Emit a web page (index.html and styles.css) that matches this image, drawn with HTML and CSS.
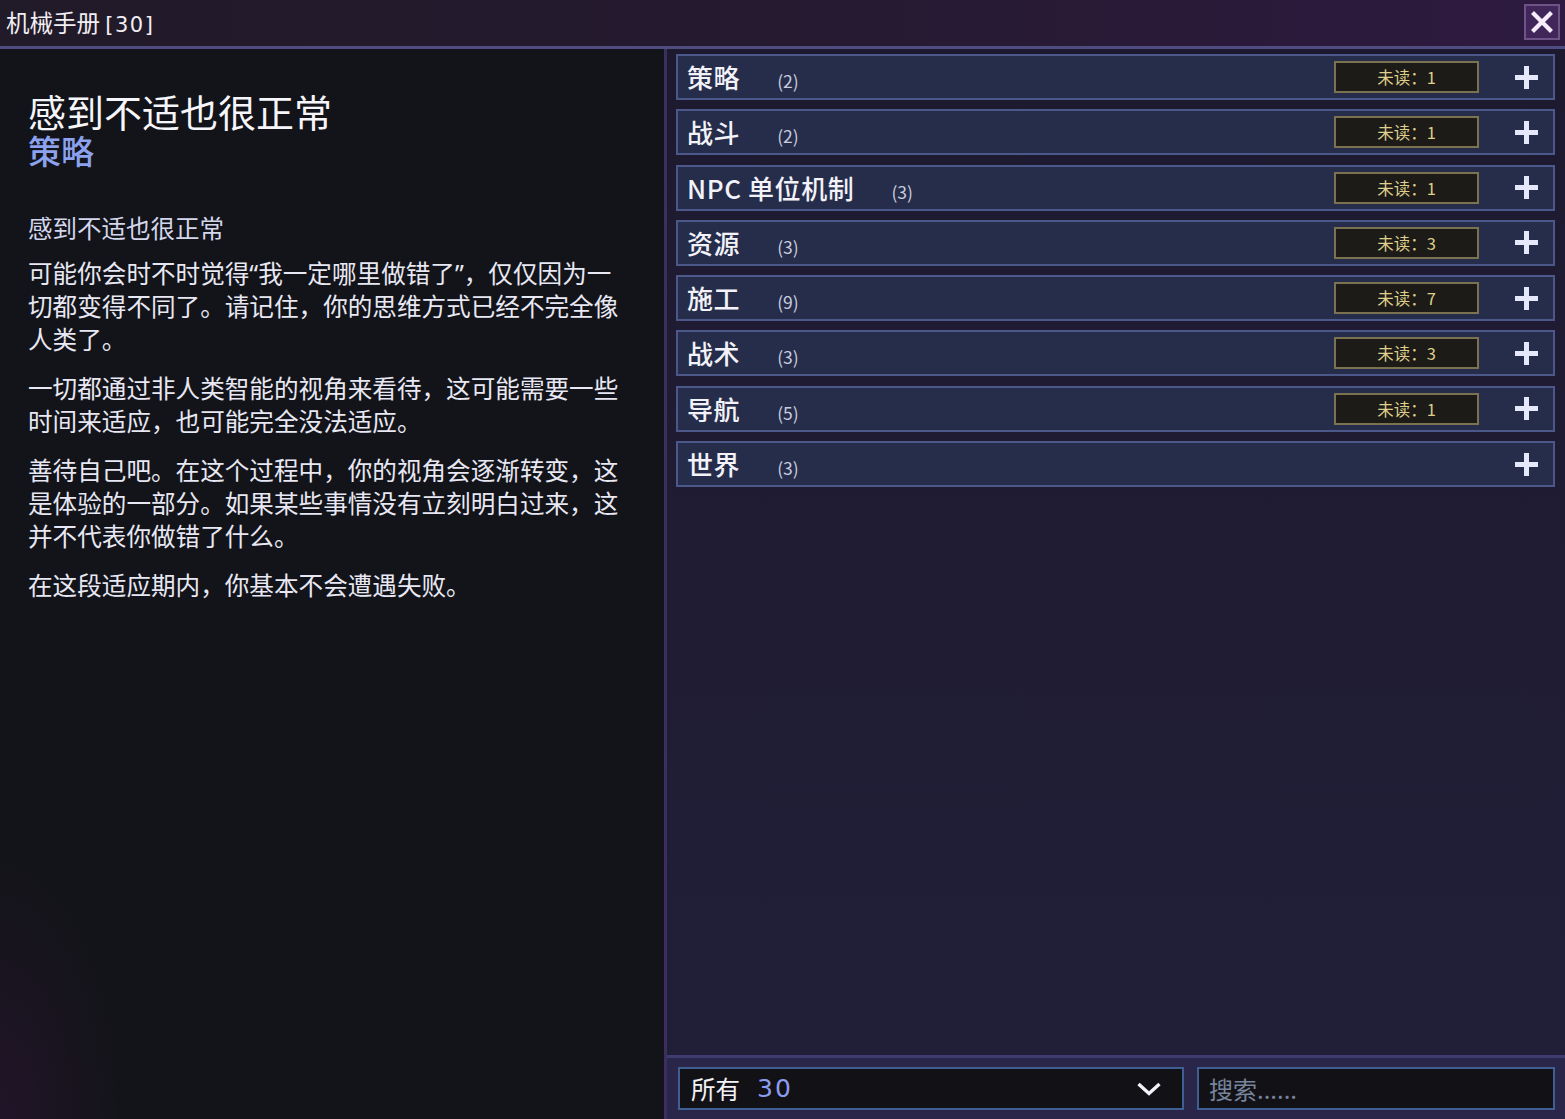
FILE: index.html
```html
<!DOCTYPE html>
<html lang="zh-CN">
<head>
<meta charset="utf-8">
<title>机械手册</title>
<link rel="stylesheet" href="styles.css">
</head>
<body>
<div class="window">
  <header class="titlebar">
    <div class="title">机械手册 <span class="title-count">[30]</span></div>
    <button class="close" aria-label="关闭">
      <svg width="22" height="22" viewBox="0 0 22 22"><path d="M3 3 L19 19 M19 3 L3 19" stroke="#f6ecfa" stroke-width="4.2" stroke-linecap="square"/></svg>
    </button>
  </header>
  <div class="main">
    <section class="left">
      <h1 class="heading">感到不适也很正常</h1>
      <div class="category">策略</div>
      <h2 class="subheading">感到不适也很正常</h2>
      <p>可能你会时不时觉得“我一定哪里做错了”，仅仅因为一切都变得不同了。请记住，你的思维方式已经不完全像人类了。</p>
      <p>一切都通过非人类智能的视角来看待，这可能需要一些时间来适应，也可能完全没法适应。</p>
      <p>善待自己吧。在这个过程中，你的视角会逐渐转变，这是体验的一部分。如果某些事情没有立刻明白过来，这并不代表你做错了什么。</p>
      <p>在这段适应期内，你基本不会遭遇失败。</p>
    </section>
    <section class="right">
      <div class="list">
        <div class="row"><span class="row-title">策略</span><span class="row-count">(2)</span><span class="badge">未读：1</span><span class="plus"></span></div>
        <div class="row"><span class="row-title">战斗</span><span class="row-count">(2)</span><span class="badge">未读：1</span><span class="plus"></span></div>
        <div class="row"><span class="row-title">NPC 单位机制</span><span class="row-count">(3)</span><span class="badge">未读：1</span><span class="plus"></span></div>
        <div class="row"><span class="row-title">资源</span><span class="row-count">(3)</span><span class="badge">未读：3</span><span class="plus"></span></div>
        <div class="row"><span class="row-title">施工</span><span class="row-count">(9)</span><span class="badge">未读：7</span><span class="plus"></span></div>
        <div class="row"><span class="row-title">战术</span><span class="row-count">(3)</span><span class="badge">未读：3</span><span class="plus"></span></div>
        <div class="row"><span class="row-title">导航</span><span class="row-count">(5)</span><span class="badge">未读：1</span><span class="plus"></span></div>
        <div class="row"><span class="row-title">世界</span><span class="row-count">(3)</span><span class="plus"></span></div>
      </div>
      <footer class="footer">
        <div class="dropdown">
          <span class="dd-label">所有</span><span class="dd-num">30</span>
          <svg class="chevron" width="26" height="16" viewBox="0 0 26 16"><path d="M2.5 3 L13 12.5 L23.5 3" fill="none" stroke="#f2f2fa" stroke-width="3.4"/></svg>
        </div>
        <div class="search">搜索......</div>
      </footer>
    </section>
  </div>
</div>
</body>
</html>
```

FILE: styles.css
```css
* { box-sizing: border-box; }
html, body { margin: 0; padding: 0; }
body {
  width: 1565px;
  height: 1119px;
  overflow: hidden;
  background: #131419;
  font-family: "Noto Sans CJK SC", "Noto Sans", sans-serif;
  color: #eeeef6;
}
.window {
  display: flex;
  flex-direction: column;
  height: 100%;
}
.titlebar {
  height: 49px;
  flex: none;
  display: flex;
  align-items: center;
  justify-content: space-between;
  padding: 0 5px 2px 6px;
  background: linear-gradient(90deg, #211a28 0%, #251a30 50%, #2e1a40 100%);
  border-bottom: 3px solid #4f4c82;
}
.title {
  font-size: 23.5px;
  color: #f1eef4;
}
.title-count {
  font-family: "DejaVu Sans", sans-serif;
  font-size: 21px;
  letter-spacing: 1.5px;
}
.close {
  width: 36px;
  height: 36px;
  padding: 0;
  border: 2px solid #6e5388;
  background: #41265a;
  display: flex;
  align-items: center;
  justify-content: center;
}
.main {
  flex: 1;
  display: flex;
  min-height: 0;
}
.left {
  width: 664px;
  flex: none;
  padding: 42px 28px 0 28px;
  background: radial-gradient(ellipse 120px 260px at 0% 100%, rgba(60, 20, 70, 0.35), rgba(0,0,0,0) 100%), #131419;
}
.heading {
  margin: 0;
  font-size: 38px;
  line-height: 40px;
  font-weight: 400;
  color: #f6f6fa;
}
.category {
  font-size: 33px;
  line-height: 38px;
  color: #8ca2ee;
  font-weight: 500;
}
.subheading {
  margin: 42px 0 13px;
  font-size: 24.5px;
  line-height: 33px;
  font-weight: 400;
  color: #d3d7ec;
}
.left p {
  margin: 0 0 16px;
  width: 606px;
  font-family: "Noto Sans", "Noto Sans CJK SC", sans-serif;
  font-size: 24.6px;
  line-height: 33px;
  color: #e8e8f4;
}
.right {
  flex: 1;
  display: flex;
  flex-direction: column;
  border-left: 3px solid #3a2f5e;
  background: linear-gradient(180deg, #1d1a30 0%, #211e38 100%);
}
.list {
  flex: 1;
  display: flex;
  flex-direction: column;
  gap: 9.3px;
  padding: 5px 10px 0 9px;
}
.row {
  height: 46px;
  display: flex;
  align-items: baseline;
  padding: 0 15px 0 9px;
  background: #252d4b;
  border: 2px solid #4b5889;
  line-height: 42px;
}
.row-title {
  font-size: 26px;
  color: #f2f2f8;
  font-weight: 500;
  letter-spacing: 0.6px;
}
.row-count {
  margin-left: 37px;
  font-size: 17.5px;
  color: #c8ccde;
}
.badge {
  margin-left: auto;
  align-self: center;
  width: 145px;
  height: 32px;
  border: 2px solid #7b7252;
  background: #1d1b17;
  color: #dfcf8c;
  font-size: 16.5px;
  line-height: 28px;
  text-align: center;
}
.plus {
  align-self: center;
  position: relative;
  width: 23px;
  height: 23px;
  margin-left: 36px;
}
.row > .row-count + .plus { margin-left: auto; }
.plus::before, .plus::after {
  content: "";
  position: absolute;
  background: #e4e8fa;
}
.plus::before { left: 0; top: 9px; width: 23px; height: 5px; }
.plus::after { left: 9px; top: 0; width: 5px; height: 23px; }
.footer {
  height: 64px;
  flex: none;
  display: flex;
  gap: 13px;
  padding: 9px 10px 9px 11px;
  background: #29264a;
  border-top: 3px solid #3e3b6f;
}
.dropdown {
  width: 506px;
  display: flex;
  align-items: center;
  padding: 0 20px 0 11px;
  background: #121216;
  border: 2px solid #3f5f92;
}
.dd-label {
  font-size: 24.5px;
  color: #f2f2f8;
}
.dd-num {
  margin-left: 17px;
  font-family: "DejaVu Sans", sans-serif;
  font-size: 25px;
  color: #8c9cf0;
  letter-spacing: 2px;
}
.chevron { margin-left: auto; }
.search {
  flex: 1;
  display: flex;
  align-items: center;
  padding: 0 10px;
  background: #121216;
  border: 2px solid #3f5f92;
  font-size: 24px;
  color: #76849c;
}
```
